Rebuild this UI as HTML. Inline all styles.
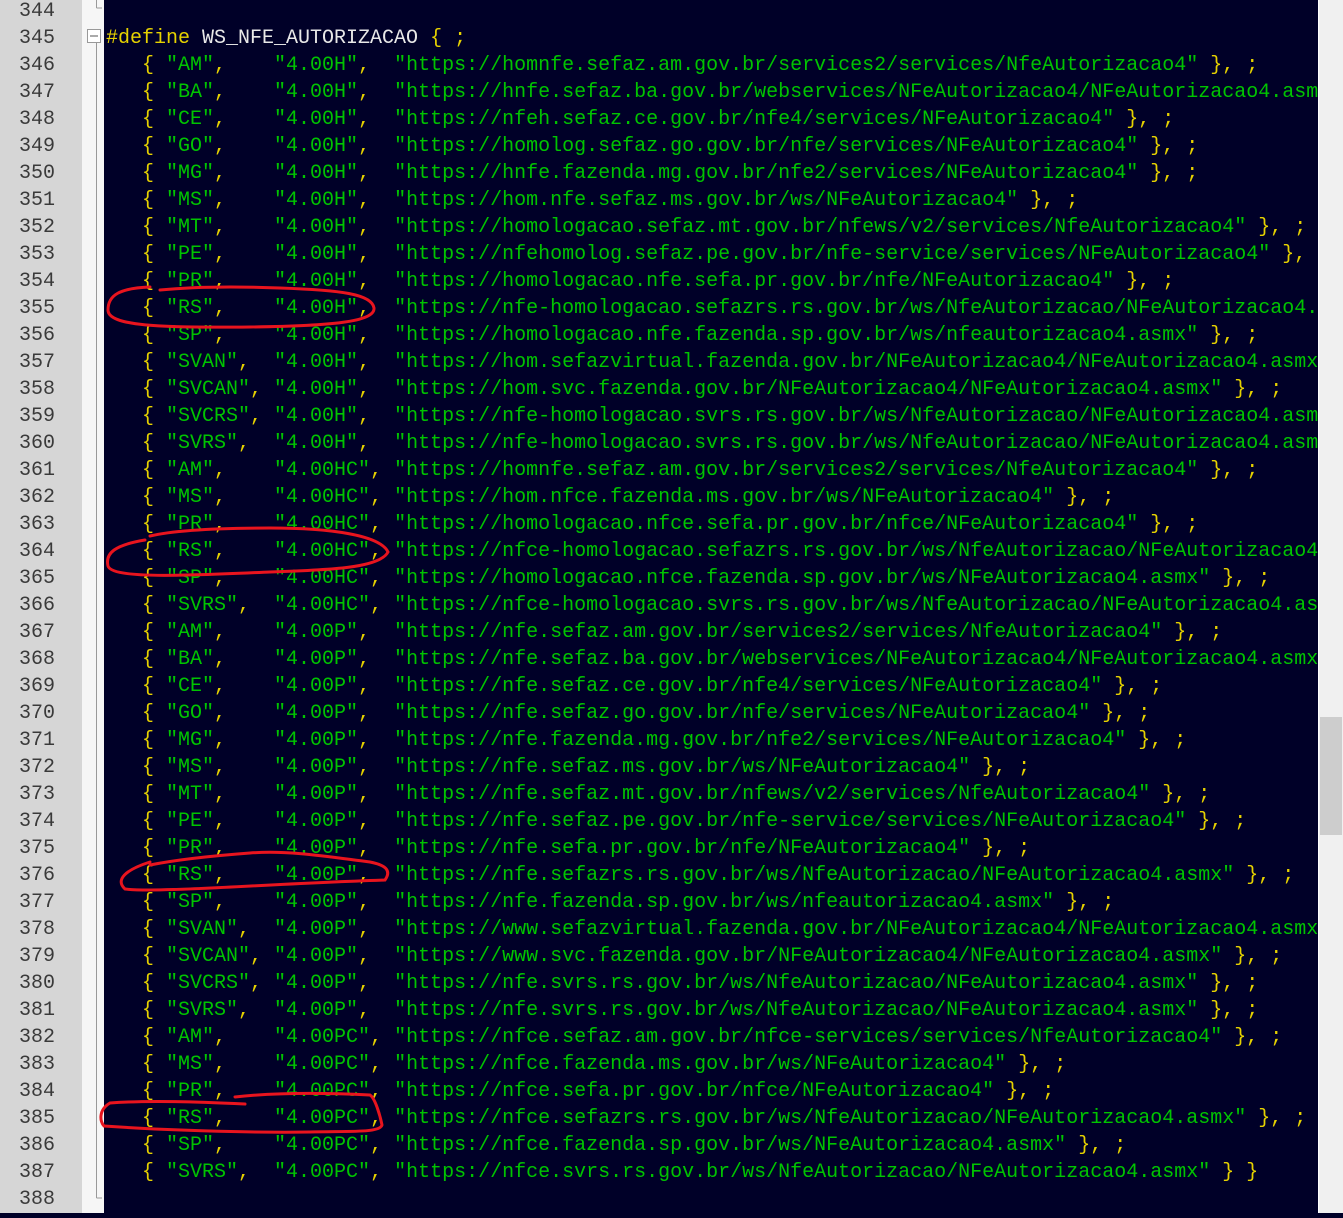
<!DOCTYPE html>
<html><head><meta charset="utf-8"><style>
html,body{margin:0;padding:0;width:1343px;height:1213px;overflow:hidden;background:#000028;}
.g{position:absolute;left:0;top:0;width:82px;height:1213px;background:#d6d6d6;}
.w{position:absolute;left:82px;top:0;width:22px;height:1213px;background:#f6f6f6;}
.nums{position:absolute;left:0;top:-2px;width:55px;text-align:right;font:20px/27px "Liberation Mono",monospace;color:#3a3a3a;white-space:pre;}
.code{position:absolute;left:106px;top:-2px;width:1212px;height:1220px;overflow:hidden;font:20px/27px "Liberation Mono",monospace;color:#e6d200;white-space:pre;}
.s{color:#00c400;}
.id{color:#e8e8e8;}
.sb{position:absolute;left:1318px;top:0;width:25px;height:1213px;background:#f0f0f0;border-left:1px solid #fff;}
.th{position:absolute;left:1320px;top:717px;width:22px;height:118px;background:#cdcdcd;}
</style></head><body>
<div class="g"></div><div class="w"></div>
<svg style="position:absolute;left:82px;top:0" width="22" height="1213">
<line x1="14.5" y1="0" x2="14.5" y2="8" stroke="#999"/><line x1="14.5" y1="8" x2="20" y2="8" stroke="#999"/>
<rect x="5.5" y="29.5" width="13" height="13" fill="#fff" stroke="#999"/><line x1="8" y1="36" x2="16" y2="36" stroke="#555"/>
<line x1="14.5" y1="43" x2="14.5" y2="1198" stroke="#999"/><line x1="14.5" y1="1198" x2="20" y2="1198" stroke="#999"/>
</svg>
<div class="nums">344
345
346
347
348
349
350
351
352
353
354
355
356
357
358
359
360
361
362
363
364
365
366
367
368
369
370
371
372
373
374
375
376
377
378
379
380
381
382
383
384
385
386
387
388</div>
<div class="code">
#define <span class="id">WS_NFE_AUTORIZACAO</span> { ;
   { <span class="s">"AM"</span>,    <span class="s">"4.00H"</span>,  <span class="s">"https://homnfe.sefaz.am.gov.br/services2/services/NfeAutorizacao4"</span> }, ;
   { <span class="s">"BA"</span>,    <span class="s">"4.00H"</span>,  <span class="s">"https://hnfe.sefaz.ba.gov.br/webservices/NFeAutorizacao4/NFeAutorizacao4.asmx"</span> }, ;
   { <span class="s">"CE"</span>,    <span class="s">"4.00H"</span>,  <span class="s">"https://nfeh.sefaz.ce.gov.br/nfe4/services/NFeAutorizacao4"</span> }, ;
   { <span class="s">"GO"</span>,    <span class="s">"4.00H"</span>,  <span class="s">"https://homolog.sefaz.go.gov.br/nfe/services/NFeAutorizacao4"</span> }, ;
   { <span class="s">"MG"</span>,    <span class="s">"4.00H"</span>,  <span class="s">"https://hnfe.fazenda.mg.gov.br/nfe2/services/NFeAutorizacao4"</span> }, ;
   { <span class="s">"MS"</span>,    <span class="s">"4.00H"</span>,  <span class="s">"https://hom.nfe.sefaz.ms.gov.br/ws/NFeAutorizacao4"</span> }, ;
   { <span class="s">"MT"</span>,    <span class="s">"4.00H"</span>,  <span class="s">"https://homologacao.sefaz.mt.gov.br/nfews/v2/services/NfeAutorizacao4"</span> }, ;
   { <span class="s">"PE"</span>,    <span class="s">"4.00H"</span>,  <span class="s">"https://nfehomolog.sefaz.pe.gov.br/nfe-service/services/NFeAutorizacao4"</span> },
   { <span class="s">"PR"</span>,    <span class="s">"4.00H"</span>,  <span class="s">"https://homologacao.nfe.sefa.pr.gov.br/nfe/NFeAutorizacao4"</span> }, ;
   { <span class="s">"RS"</span>,    <span class="s">"4.00H"</span>,  <span class="s">"https://nfe-homologacao.sefazrs.rs.gov.br/ws/NfeAutorizacao/NFeAutorizacao4.asmx"</span> }, ;
   { <span class="s">"SP"</span>,    <span class="s">"4.00H"</span>,  <span class="s">"https://homologacao.nfe.fazenda.sp.gov.br/ws/nfeautorizacao4.asmx"</span> }, ;
   { <span class="s">"SVAN"</span>,  <span class="s">"4.00H"</span>,  <span class="s">"https://hom.sefazvirtual.fazenda.gov.br/NFeAutorizacao4/NFeAutorizacao4.asmx"</span> }, ;
   { <span class="s">"SVCAN"</span>, <span class="s">"4.00H"</span>,  <span class="s">"https://hom.svc.fazenda.gov.br/NFeAutorizacao4/NFeAutorizacao4.asmx"</span> }, ;
   { <span class="s">"SVCRS"</span>, <span class="s">"4.00H"</span>,  <span class="s">"https://nfe-homologacao.svrs.rs.gov.br/ws/NfeAutorizacao/NFeAutorizacao4.asmx"</span> }, ;
   { <span class="s">"SVRS"</span>,  <span class="s">"4.00H"</span>,  <span class="s">"https://nfe-homologacao.svrs.rs.gov.br/ws/NfeAutorizacao/NFeAutorizacao4.asmx"</span> }, ;
   { <span class="s">"AM"</span>,    <span class="s">"4.00HC"</span>, <span class="s">"https://homnfe.sefaz.am.gov.br/services2/services/NfeAutorizacao4"</span> }, ;
   { <span class="s">"MS"</span>,    <span class="s">"4.00HC"</span>, <span class="s">"https://hom.nfce.fazenda.ms.gov.br/ws/NFeAutorizacao4"</span> }, ;
   { <span class="s">"PR"</span>,    <span class="s">"4.00HC"</span>, <span class="s">"https://homologacao.nfce.sefa.pr.gov.br/nfce/NFeAutorizacao4"</span> }, ;
   { <span class="s">"RS"</span>,    <span class="s">"4.00HC"</span>, <span class="s">"https://nfce-homologacao.sefazrs.rs.gov.br/ws/NfeAutorizacao/NFeAutorizacao4.asmx"</span> }, ;
   { <span class="s">"SP"</span>,    <span class="s">"4.00HC"</span>, <span class="s">"https://homologacao.nfce.fazenda.sp.gov.br/ws/NFeAutorizacao4.asmx"</span> }, ;
   { <span class="s">"SVRS"</span>,  <span class="s">"4.00HC"</span>, <span class="s">"https://nfce-homologacao.svrs.rs.gov.br/ws/NfeAutorizacao/NFeAutorizacao4.asmx"</span> }, ;
   { <span class="s">"AM"</span>,    <span class="s">"4.00P"</span>,  <span class="s">"https://nfe.sefaz.am.gov.br/services2/services/NfeAutorizacao4"</span> }, ;
   { <span class="s">"BA"</span>,    <span class="s">"4.00P"</span>,  <span class="s">"https://nfe.sefaz.ba.gov.br/webservices/NFeAutorizacao4/NFeAutorizacao4.asmx"</span> }, ;
   { <span class="s">"CE"</span>,    <span class="s">"4.00P"</span>,  <span class="s">"https://nfe.sefaz.ce.gov.br/nfe4/services/NFeAutorizacao4"</span> }, ;
   { <span class="s">"GO"</span>,    <span class="s">"4.00P"</span>,  <span class="s">"https://nfe.sefaz.go.gov.br/nfe/services/NFeAutorizacao4"</span> }, ;
   { <span class="s">"MG"</span>,    <span class="s">"4.00P"</span>,  <span class="s">"https://nfe.fazenda.mg.gov.br/nfe2/services/NFeAutorizacao4"</span> }, ;
   { <span class="s">"MS"</span>,    <span class="s">"4.00P"</span>,  <span class="s">"https://nfe.sefaz.ms.gov.br/ws/NFeAutorizacao4"</span> }, ;
   { <span class="s">"MT"</span>,    <span class="s">"4.00P"</span>,  <span class="s">"https://nfe.sefaz.mt.gov.br/nfews/v2/services/NfeAutorizacao4"</span> }, ;
   { <span class="s">"PE"</span>,    <span class="s">"4.00P"</span>,  <span class="s">"https://nfe.sefaz.pe.gov.br/nfe-service/services/NFeAutorizacao4"</span> }, ;
   { <span class="s">"PR"</span>,    <span class="s">"4.00P"</span>,  <span class="s">"https://nfe.sefa.pr.gov.br/nfe/NFeAutorizacao4"</span> }, ;
   { <span class="s">"RS"</span>,    <span class="s">"4.00P"</span>,  <span class="s">"https://nfe.sefazrs.rs.gov.br/ws/NfeAutorizacao/NFeAutorizacao4.asmx"</span> }, ;
   { <span class="s">"SP"</span>,    <span class="s">"4.00P"</span>,  <span class="s">"https://nfe.fazenda.sp.gov.br/ws/nfeautorizacao4.asmx"</span> }, ;
   { <span class="s">"SVAN"</span>,  <span class="s">"4.00P"</span>,  <span class="s">"https://www.sefazvirtual.fazenda.gov.br/NFeAutorizacao4/NFeAutorizacao4.asmx"</span> }, ;
   { <span class="s">"SVCAN"</span>, <span class="s">"4.00P"</span>,  <span class="s">"https://www.svc.fazenda.gov.br/NFeAutorizacao4/NFeAutorizacao4.asmx"</span> }, ;
   { <span class="s">"SVCRS"</span>, <span class="s">"4.00P"</span>,  <span class="s">"https://nfe.svrs.rs.gov.br/ws/NfeAutorizacao/NFeAutorizacao4.asmx"</span> }, ;
   { <span class="s">"SVRS"</span>,  <span class="s">"4.00P"</span>,  <span class="s">"https://nfe.svrs.rs.gov.br/ws/NfeAutorizacao/NFeAutorizacao4.asmx"</span> }, ;
   { <span class="s">"AM"</span>,    <span class="s">"4.00PC"</span>, <span class="s">"https://nfce.sefaz.am.gov.br/nfce-services/services/NfeAutorizacao4"</span> }, ;
   { <span class="s">"MS"</span>,    <span class="s">"4.00PC"</span>, <span class="s">"https://nfce.fazenda.ms.gov.br/ws/NFeAutorizacao4"</span> }, ;
   { <span class="s">"PR"</span>,    <span class="s">"4.00PC"</span>, <span class="s">"https://nfce.sefa.pr.gov.br/nfce/NFeAutorizacao4"</span> }, ;
   { <span class="s">"RS"</span>,    <span class="s">"4.00PC"</span>, <span class="s">"https://nfce.sefazrs.rs.gov.br/ws/NfeAutorizacao/NFeAutorizacao4.asmx"</span> }, ;
   { <span class="s">"SP"</span>,    <span class="s">"4.00PC"</span>, <span class="s">"https://nfce.fazenda.sp.gov.br/ws/NFeAutorizacao4.asmx"</span> }, ;
   { <span class="s">"SVRS"</span>,  <span class="s">"4.00PC"</span>, <span class="s">"https://nfce.svrs.rs.gov.br/ws/NfeAutorizacao/NFeAutorizacao4.asmx"</span> } }
</div>
<svg style="position:absolute;left:0;top:0" width="1343" height="1213" fill="none" stroke="#e8141e" stroke-width="3" stroke-linecap="round">
<path d="M150 287 C120 288 108 295 108 310 C108 326 160 328 250 327 C330 326 375 322 374 308 C372 294 340 290 280 288 C230 286 190 287 160 290"/>
<path d="M145 540 C115 545 105 553 108 566 C112 580 200 575 270 572 C330 570 380 568 388 552 C380 535 330 528 270 528 C215 528 175 530 150 536"/>
<path d="M150 862 C125 870 115 880 125 889 C160 893 260 884 385 880 C392 870 385 865 370 862 C330 857 290 850 250 853 C210 856 175 860 150 865"/>
<path d="M245 1104 C200 1102 150 1100 110 1103 C98 1110 100 1122 104 1126 C160 1130 250 1133 310 1132 C350 1131 380 1133 382 1125 C380 1115 375 1098 370 1095 C330 1093 280 1092 235 1097"/>
</svg>
<div class="sb"></div><div class="th"></div>
</body></html>
